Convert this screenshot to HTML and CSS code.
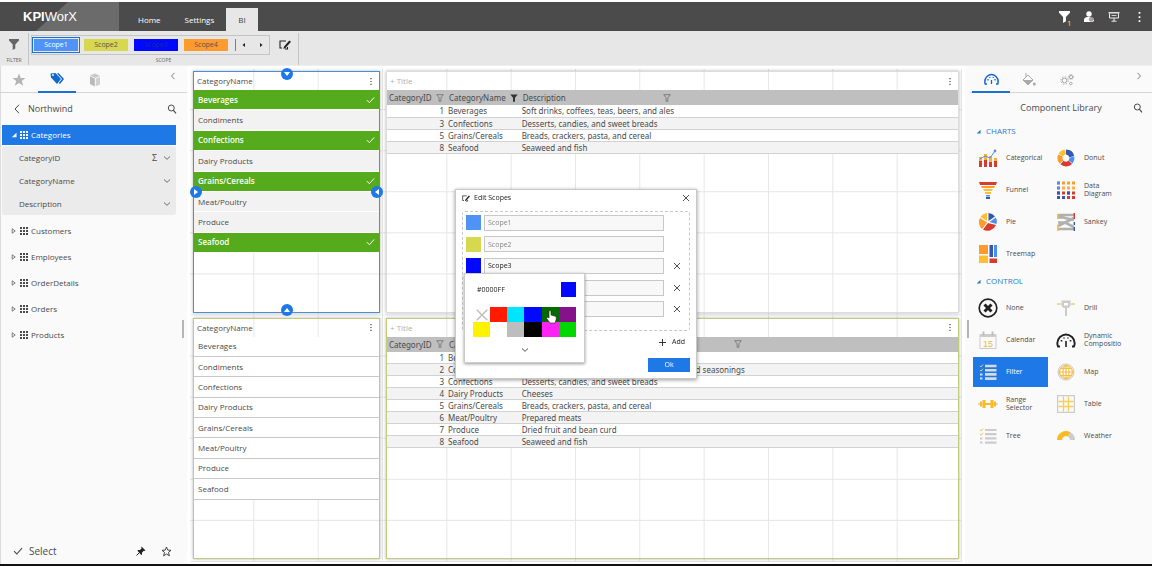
FILE: index.html
```html
<!DOCTYPE html>
<html lang="en">
<head>
  <meta charset="UTF-8">
  <meta name="viewport" content="width=device-width, initial-scale=1.0">
  <title>KPIWorX</title>
  <link rel="stylesheet" href="styles.css">
</head>
<body>

<!-- Shared icon shapes -->
<svg class="symbols" aria-hidden="true">
  <symbol id="i-funnel" viewBox="0 0 10 11"><path d="M0 0H10V1.5L6.3 5.5V9.5L3.7 11V5.5L0 1.5Z" fill="currentColor"/></symbol>
  <symbol id="i-filter" viewBox="0 0 8 8"><path d="M.7.7H7.3L4.9 3.8V7.3H3.1V3.8Z" fill="none" stroke="currentColor" stroke-width=".9"/></symbol>
  <symbol id="i-filter-on" viewBox="0 0 8 8"><path d="M.3.5H7.7L5 3.8V7.7H3V3.8Z" fill="currentColor"/></symbol>
  <symbol id="i-grid" viewBox="0 0 8 8"><path d="M0 0H2V2H0ZM3 0H5V2H3ZM6 0H8V2H6ZM0 3H2V5H0ZM3 3H5V5H3ZM6 3H8V5H6ZM0 6H2V8H0ZM3 6H5V8H3ZM6 6H8V8H6Z" fill="currentColor"/></symbol>
  <symbol id="i-down" viewBox="0 0 8 8"><path d="M1 2.5L4 5.3L7 2.5" fill="none" stroke="currentColor" stroke-width=".8"/></symbol>
  <symbol id="i-left" viewBox="0 0 8 10"><path d="M6 .8L2 5L6 9.2" fill="none" stroke="currentColor"/></symbol>
  <symbol id="i-right" viewBox="0 0 8 10"><path d="M2 .8L6 5L2 9.2" fill="none" stroke="currentColor"/></symbol>
  <symbol id="i-search" viewBox="0 0 10 10"><circle cx="4.3" cy="4" r="3" fill="none" stroke="currentColor"/><path d="M6.3 6.2L9 9.3" stroke="currentColor" stroke-width="1.2"/></symbol>
  <symbol id="i-close" viewBox="0 0 8 8"><path d="M1 1L7 7M7 1L1 7" stroke="currentColor" stroke-width=".8"/></symbol>
  <symbol id="i-check" viewBox="0 0 10 8"><path d="M1 4.2L3.8 7L9 1.2" fill="none" stroke="currentColor" stroke-width="1.1"/></symbol>
  <symbol id="i-dots" viewBox="0 0 2 8"><path d="M.3 0H1.7V1.4H.3ZM.3 3.3H1.7V4.7H.3ZM.3 6.6H1.7V8H.3Z" fill="currentColor"/></symbol>
  <symbol id="i-edit" viewBox="0 0 12 10"><path d="M7 1H1V8H3M6 9H8.5V7" fill="none" stroke="currentColor" stroke-width="1.1"/><path d="M10.3 .6L12 1.8L6.5 8L4.4 9L4.9 6.8Z" fill="currentColor"/></symbol>
  <symbol id="i-expand" viewBox="0 0 6 8"><path d="M1.2 1.8L4.2 4L1.2 6.2Z" fill="none" stroke="currentColor" stroke-width=".7"/></symbol>
  <symbol id="i-open" viewBox="0 0 6 6"><path d="M5.5 .8V5.3H.8Z" fill="currentColor"/></symbol>
</svg>

<header class="topbar">
  <div class="brand">
    <svg class="brand-shade" viewBox="0 0 119 29" preserveAspectRatio="none"><path d="M68 0H119V29H36Z" fill="#6b6b6b"/></svg>
    <span class="brand-name"><b>KPI</b>WorX</span>
  </div>
  <nav class="nav">
    <a href="#">Home</a>
    <a href="#">Settings</a>
    <a href="#" class="active">BI</a>
  </nav>
  <div class="topbar-actions">
    <button class="icon-button" aria-label="Filters"><svg width="11" height="12"><use href="#i-funnel"/></svg><span class="filter-count">1</span></button>
    <button class="icon-button" aria-label="User"><svg width="12" height="12" viewBox="0 0 12 12"><circle cx="6" cy="3" r="2.7" fill="#fff"/><path d="M1 11V8.5Q1.5 6 4.5 6H8Q10.8 6.5 11 9V10L9.5 11Z" fill="#fff"/><circle cx="8.3" cy="8.3" r="2" fill="#b5a6a6" stroke="#777" stroke-width=".6"/></svg></button>
    <button class="icon-button" aria-label="Present"><svg width="12" height="10" viewBox="0 0 12 10"><path d="M.5 .8H11.5" stroke="#eee" stroke-width="1.4"/><path d="M1.5 1.5V6H10.5V1.5M6 6V9M3.5 9.2H8.5" fill="none" stroke="#eee"/><path d="M3.5 3.5H8.5" stroke="#ccc"/></svg></button>
    <button class="icon-button" aria-label="More"><svg width="3" height="10"><use href="#i-dots"/></svg></button>
  </div>
</header>

<section class="ribbon">
  <div class="ribbon-group">
    <button class="ribbon-body icon-button" aria-label="Filter"><svg width="10" height="11"><use href="#i-funnel"/></svg></button>
    <div class="ribbon-label">FILTER</div>
  </div>
  <div class="ribbon-group ribbon-scopes">
    <div class="ribbon-body">
      <div class="scope-strip">
        <button class="scope scope-1 selected">Scope1</button>
        <button class="scope scope-2">Scope2</button>
        <button class="scope scope-3">Scope3</button>
        <button class="scope scope-4">Scope4</button>
        <span class="scope-next"></span>
        <button class="arrow" aria-label="Previous scope"><svg width="4" height="6"><path d="M3 1V5L.5 3Z"/></svg></button>
        <button class="arrow" aria-label="Next scope"><svg width="4" height="6"><path d="M1 1V5L3.5 3Z"/></svg></button>
      </div>
      <button class="icon-button edit-scopes" aria-label="Edit scopes"><svg width="12" height="10"><use href="#i-edit"/></svg></button>
    </div>
    <div class="ribbon-label">SCOPE</div>
  </div>
</section>

<main class="workspace">

  <!-- Data panel -->
  <aside class="panel data-panel">
    <div class="tabs">
      <button class="tab" aria-label="Favorites"><svg width="14" height="14" viewBox="0 0 14 14"><path d="M7 .5L8.8 5H13.5L9.8 8L11.2 12.8L7 10L2.8 12.8L4.2 8L.5 5H5.2Z" fill="#b5b5b5"/></svg></button>
      <button class="tab active" aria-label="Tags"><svg width="15" height="13" viewBox="0 0 15 13"><path d="M.5 1.5L5.5 1L11 7L7 12L1 5.5Z" fill="#1368cf"/><circle cx="3" cy="3" r=".9" fill="#fff"/><path d="M7 1.5L8.5 1L14 7L10 12L8.8 11L12 7Z" fill="#1368cf"/></svg></button>
      <button class="tab" aria-label="Models"><svg width="12" height="14" viewBox="0 0 12 14"><path d="M1 2.5L6 .5L11 3L6.500 5Z" fill="#c9c9c9"/><path d="M1 3.300L5.800 5.600V13.500L1 11Z" fill="#b9b9b9"/><path d="M6.800 5.800L11 4V11.500L6.800 13.300Z" fill="#d0d0d0"/></svg></button>
      <button class="collapse" aria-label="Collapse"><svg width="6" height="8"><use href="#i-left"/></svg></button>
    </div>
    <div class="source">
      <button class="icon-button" aria-label="Back"><svg width="8" height="10"><use href="#i-left"/></svg></button>
      <h2>Northwind</h2>
      <button class="icon-button" aria-label="Search"><svg width="10" height="10"><use href="#i-search"/></svg></button>
    </div>
    <ul class="tree">
      <li class="node open"><svg width="6" height="6"><use href="#i-open"/></svg><svg width="8" height="8"><use href="#i-grid"/></svg>Categories</li>
      <li>
        <ul class="fields">
          <li>CategoryID<span class="sigma">Σ</span><svg width="8" height="8"><use href="#i-down"/></svg></li>
          <li>CategoryName<svg width="8" height="8"><use href="#i-down"/></svg></li>
          <li>Description<svg width="8" height="8"><use href="#i-down"/></svg></li>
        </ul>
      </li>
      <li class="node"><svg width="6" height="8"><use href="#i-expand"/></svg><svg width="8" height="8"><use href="#i-grid"/></svg>Customers</li>
      <li class="node"><svg width="6" height="8"><use href="#i-expand"/></svg><svg width="8" height="8"><use href="#i-grid"/></svg>Employees</li>
      <li class="node"><svg width="6" height="8"><use href="#i-expand"/></svg><svg width="8" height="8"><use href="#i-grid"/></svg>OrderDetails</li>
      <li class="node"><svg width="6" height="8"><use href="#i-expand"/></svg><svg width="8" height="8"><use href="#i-grid"/></svg>Orders</li>
      <li class="node"><svg width="6" height="8"><use href="#i-expand"/></svg><svg width="8" height="8"><use href="#i-grid"/></svg>Products</li>
    </ul>
    <div class="panel-footer">
      <button class="select"><svg width="10" height="8"><use href="#i-check"/></svg>Select</button>
      <button class="icon-button" aria-label="Pin"><svg width="10" height="10" viewBox="0 0 10 10"><path d="M5.5 .5L9.5 4.5L8.5 5L7.8 4.7L6 6.5V8.5L5.2 9L1.5 4.8L2 4L4 4L5.7 2.3L5.2 1.3Z" fill="#222"/><path d="M3.5 6.5L.5 9.5" stroke="#222"/></svg></button>
      <button class="icon-button" aria-label="Add to favorites"><svg width="11" height="11" viewBox="0 0 11 11"><path d="M5.5 1L6.8 4.1L10 4.3L7.5 6.4L8.4 9.8L5.5 8L2.6 9.8L3.5 6.4L1 4.3L4.2 4.1Z" fill="none" stroke="#333" stroke-width=".9"/></svg></button>
    </div>
    <span class="grip"></span>
  </aside>

  <!-- Dashboard -->
  <div class="board">
    <article class="widget narrow selected">
      <header class="widget-head">CategoryName<button class="icon-button" aria-label="Menu"><svg width="2" height="7"><use href="#i-dots"/></svg></button></header>
      <ul class="filter-list striped">
        <li class="on">Beverages<svg width="9" height="8"><use href="#i-check"/></svg></li>
        <li>Condiments</li>
        <li class="on">Confections<svg width="9" height="8"><use href="#i-check"/></svg></li>
        <li>Dairy Products</li>
        <li class="on">Grains/Cereals<svg width="9" height="8"><use href="#i-check"/></svg></li>
        <li>Meat/Poultry</li>
        <li>Produce</li>
        <li class="on">Seafood<svg width="9" height="8"><use href="#i-check"/></svg></li>
      </ul>
      <span class="handle top"><svg width="6" height="4"><path d="M0 0H6L3 4Z"/></svg></span>
      <span class="handle bottom"><svg width="6" height="4"><path d="M0 4H6L3 0Z"/></svg></span>
      <span class="handle left"><svg width="4" height="6"><path d="M0 0V6L4 3Z"/></svg></span>
      <span class="handle right"><svg width="4" height="6"><path d="M4 0V6L0 3Z"/></svg></span>
    </article>

    <article class="widget wide">
      <header class="widget-head"><span class="placeholder">+ Title</span><button class="icon-button" aria-label="Menu"><svg width="2" height="7"><use href="#i-dots"/></svg></button></header>
      <table class="data">
        <thead>
          <tr>
            <th><div>CategoryID<svg width="8" height="8"><use href="#i-filter"/></svg></div></th>
            <th><div>CategoryName<svg class="applied" width="8" height="8"><use href="#i-filter-on"/></svg></div></th>
            <th><div>Description<svg width="8" height="8"><use href="#i-filter"/></svg></div></th>
            <th class="rest"></th>
          </tr>
        </thead>
        <tbody>
          <tr><td>1</td><td>Beverages</td><td>Soft drinks, coffees, teas, beers, and ales</td><td></td></tr>
          <tr><td>3</td><td>Confections</td><td>Desserts, candies, and sweet breads</td><td></td></tr>
          <tr><td>5</td><td>Grains/Cereals</td><td>Breads, crackers, pasta, and cereal</td><td></td></tr>
          <tr><td>8</td><td>Seafood</td><td>Seaweed and fish</td><td></td></tr>
        </tbody>
      </table>
    </article>

    <article class="widget narrow scoped">
      <header class="widget-head">CategoryName<button class="icon-button" aria-label="Menu"><svg width="2" height="7"><use href="#i-dots"/></svg></button></header>
      <ul class="filter-list ruled">
        <li>Beverages</li>
        <li>Condiments</li>
        <li>Confections</li>
        <li>Dairy Products</li>
        <li>Grains/Cereals</li>
        <li>Meat/Poultry</li>
        <li>Produce</li>
        <li>Seafood</li>
      </ul>
    </article>

    <article class="widget wide scoped">
      <header class="widget-head"><span class="placeholder">+ Title</span><button class="icon-button" aria-label="Menu"><svg width="2" height="7"><use href="#i-dots"/></svg></button></header>
      <table class="data">
        <thead>
          <tr>
            <th><div>CategoryID<svg width="8" height="8"><use href="#i-filter"/></svg></div></th>
            <th><div>CategoryName<svg width="8" height="8"><use href="#i-filter"/></svg></div></th>
            <th><div>Description<svg width="8" height="8"><use href="#i-filter"/></svg></div></th>
            <th class="rest"></th>
          </tr>
        </thead>
        <tbody>
          <tr><td>1</td><td>Beverages</td><td>Soft drinks, coffees, teas, beers, and ales</td><td></td></tr>
          <tr><td>2</td><td>Condiments</td><td>Sweet and savory sauces, relishes, spreads, and seasonings</td><td></td></tr>
          <tr><td>3</td><td>Confections</td><td>Desserts, candies, and sweet breads</td><td></td></tr>
          <tr><td>4</td><td>Dairy Products</td><td>Cheeses</td><td></td></tr>
          <tr><td>5</td><td>Grains/Cereals</td><td>Breads, crackers, pasta, and cereal</td><td></td></tr>
          <tr><td>6</td><td>Meat/Poultry</td><td>Prepared meats</td><td></td></tr>
          <tr><td>7</td><td>Produce</td><td>Dried fruit and bean curd</td><td></td></tr>
          <tr><td>8</td><td>Seafood</td><td>Seaweed and fish</td><td></td></tr>
        </tbody>
      </table>
    </article>
  </div>

  <!-- Component library -->
  <aside class="panel library-panel">
    <span class="grip"></span>
    <div class="tabs">
      <button class="tab active" aria-label="Components"><svg width="15" height="12" viewBox="0 0 15 12"><path d="M3 11H1.2Q0 6.5 3 3.5Q7.5 -.5 12 3.5Q15 6.5 13.8 11H12" fill="none" stroke="#1368cf" stroke-width="1.5"/><path d="M7.5 11V7M4 7.5V6M5.8 5V4M9.2 5V4M11 7.5V6" stroke="#1368cf" stroke-width="1.3"/></svg></button>
      <button class="tab" aria-label="Appearance"><svg width="14" height="13" viewBox="0 0 14 13"><path d="M1 7L6 2L11 7L6 12Z" fill="none" stroke="#aaa"/><path d="M1 7H11L6 12Z" fill="#aaa"/><path d="M4 0V4" stroke="#aaa"/><circle cx="12.3" cy="11" r="1.5" fill="#aaa"/></svg></button>
      <button class="tab" aria-label="Settings"><svg width="14" height="12" viewBox="0 0 14 12"><g fill="none" stroke="#aaa"><circle cx="4.5" cy="6.5" r="2.3"/><circle cx="4.5" cy="6.5" r="3.7" stroke-dasharray="1.5 1.4"/><circle cx="11" cy="3" r="1.6"/><circle cx="11" cy="3" r="2.5" stroke-dasharray="1 1"/><circle cx="10.8" cy="9.5" r="1.3"/></g></svg></button>
      <button class="collapse" aria-label="Collapse"><svg width="6" height="8"><use href="#i-right"/></svg></button>
    </div>
    <div class="source">
      <h2>Component Library</h2>
      <button class="icon-button" aria-label="Search"><svg width="10" height="10"><use href="#i-search"/></svg></button>
    </div>

    <h3><svg width="5" height="5"><use href="#i-open"/></svg>CHARTS</h3>
    <div class="components">
      <button class="component"><svg width="18" height="18" viewBox="0 0 18 18"><path d="M0 11H3V18H0ZM5 10H8V18H5ZM10 12H13V18H10ZM15 11H18V18H15Z" fill="#d93a30"/><path d="M0 8H3V12H0ZM5 5H8V11H5ZM10 7H13V13H10ZM15 9H18V12H15Z" fill="#fbb03b"/><path d="M1 10L6 7L11 9L16 2" fill="none" stroke="#5b8fd8"/><circle cx="16" cy="2" r="1.4" fill="#5b8fd8"/></svg>Categorical</button>
      <button class="component"><svg width="18" height="18" viewBox="-9 -9 18 18"><g fill="none" stroke-width="5"><path d="M0 -6A6 6 0 0 1 5.8 -1.5" stroke="#3458b0"/><path d="M5.9 -1A6 6 0 0 1 4.6 3.8" stroke="#4b8df0"/><path d="M4.3 4.2A6 6 0 0 1 -4 4.5" stroke="#d93a30"/><path d="M-4.5 4A6 6 0 0 1 -5.5 -2.4" stroke="#ff9b2c"/><path d="M-5.2 -3A6 6 0 0 1 -.6 -6" stroke="#fdbf2d"/></g></svg>Donut</button>
      <button class="component"><svg width="18" height="18" viewBox="0 0 18 18"><path d="M0 1H18L17 4H1Z" fill="#d93a30"/><path d="M2 5H16L15 7H3Z" fill="#ff9b2c"/><path d="M4 8H14L12.5 10H5.5Z" fill="#fdbf2d"/><path d="M6 11H12V13H6Z" fill="#fdbf2d"/><path d="M7 14H11V15.5H7Z" fill="#4b8df0"/><path d="M7 16H11V18H7Z" fill="#3458b0"/></svg>Funnel</button>
      <button class="component"><svg width="18" height="18" viewBox="0 0 18 18"><g stroke-width="3" stroke-dasharray="3 2"><path d="M0 2H18" stroke="#ff9b2c"/><path d="M0 7H18" stroke="#fbb03b"/><path d="M0 12H18" stroke="#d93a30"/><path d="M0 16.5H18" stroke="#d93a30"/></g><path d="M0 .5H3V3.5H0ZM0 5.5H3V8.5H0Z" fill="#4b8df0"/><path d="M0 10.5H3V13.5H0ZM0 15H3V18H0ZM5 15H8V18H5ZM10 10.5H13V13.5H10Z" fill="#3458b0"/></svg>Data Diagram</button>
      <button class="component"><svg width="18" height="18" viewBox="-9 -9 18 18"><path d="M.5 -1V-9A9 9 0 0 1 7 -5.5Z" fill="#3458b0"/><path d="M1.5 0L7.8 -4.5A9 9 0 0 1 8.5 2Z" fill="#4b8df0"/><path d="M0 1L8 3A9 9 0 0 1 -5 7.5Z" fill="#d93a30"/><path d="M-1 .5L-6 7A9 9 0 0 1 -8 -4Z" fill="#ff9b2c"/><path d="M-1 -1L-7.5 -5A9 9 0 0 1 -1 -9Z" fill="#fdbf2d"/></svg>Pie</button>
      <button class="component"><svg width="18" height="18" viewBox="0 0 18 18"><path d="M1 2H17M1 4.5H6L17 7M1 13L17 5M1 9.500H8L17 14M1 16H17" fill="none" stroke="#b0b0b0" stroke-width="2.600"/><path d="M.8 1V6M.8 12V18" stroke="#fdbf2d" stroke-width="1.500"/><path d="M17.300 0V6" stroke="#d93a30" stroke-width="1.400"/><path d="M17.300 9V12M17.300 14V18" stroke="#3458b0" stroke-width="1.400"/></svg>Sankey</button>
      <button class="component"><svg width="18" height="18" viewBox="0 0 18 18"><path d="M0 0H9V9H0Z" fill="#ff9b2c"/><path d="M0 10.5H9V18H0Z" fill="#fdbf2d"/><path d="M10.5 0H14V12H10.5Z" fill="#3458b0"/><path d="M15 0H18V12H15Z" fill="#4b8df0"/><path d="M10.5 13.5H18V18H10.5Z" fill="#d93a30"/></svg>Treemap</button>
    </div>

    <h3><svg width="5" height="5"><use href="#i-open"/></svg>CONTROL</h3>
    <div class="components">
      <button class="component"><svg width="20" height="20" viewBox="0 0 20 20"><circle cx="10" cy="10" r="8.8" fill="none" stroke="#222" stroke-width="1.7"/><path d="M6.5 6.5L13.5 13.5M13.5 6.5L6.5 13.5" stroke="#222" stroke-width="3"/></svg>None</button>
      <button class="component"><svg width="18" height="18" viewBox="0 0 18 18"><path d="M0 5H4M14 5H18" stroke="#e7cf7a" stroke-width="1.3"/><path d="M4.5 1.5H13.5V7L11.5 9H6.5L4.5 7Z" fill="#ccc"/><path d="M7 4H11V6.5H7Z" fill="#fff"/><path d="M9 9V17" stroke="#bbb" stroke-width="1.5"/></svg>Drill</button>
      <button class="component"><svg width="18" height="18" viewBox="0 0 18 18"><path d="M1 3.5H17V17.5H1Z" fill="none" stroke="#ccc"/><path d="M1 3H17V6H1Z" fill="#ccc"/><path d="M4.5 .5V4.5M13.5 .5V4.5" stroke="#bbb" stroke-width="1.8"/><text class="day" x="9" y="15.5" text-anchor="middle">15</text></svg>Calendar</button>
      <button class="component"><svg width="20" height="20" viewBox="0 0 20 20"><path d="M4 16.5H2Q0 11 4 7Q7 4.5 10 4.5Q13 4.5 16 7Q20 11 18 16.5H16" fill="none" stroke="#222" stroke-width="1.9"/><path d="M10 17V11M5.5 11.5V10M8 8.5V7.5M12 8.5V7.5M14.5 11.5V10" stroke="#222" stroke-width="1.6"/></svg>Dynamic Compositio</button>
      <button class="component chosen"><svg width="18" height="18" viewBox="0 0 18 18"><path d="M6 3H17.5M6 7.2H17.5M6 11.4H17.5M6 15.6H17.5" stroke="#d5dae0" stroke-width="2.6"/><path d="M1 2.8L2 4L4 1.5M1 7L2 8.2L4 5.7" fill="none" stroke="#e3c94f"/><path d="M1 11.4H3.5M1 15.6H3.5" stroke="#d5dae0" stroke-width="2"/></svg>Filter</button>
      <button class="component"><svg width="18" height="18" viewBox="0 0 18 18"><circle cx="9" cy="9" r="8" fill="none" stroke="#ccc"/><g fill="none" stroke="#f1c24a" stroke-width="1.2"><circle cx="9" cy="9" r="6.5"/><ellipse cx="9" cy="9" rx="3" ry="6.5"/><path d="M9 1V17M1 9H17M3 5.5H15M3 12.5H15"/></g></svg>Map</button>
      <button class="component"><svg width="20" height="18" viewBox="0 0 20 18"><path d="M0 9H20" stroke="#d8c58c" stroke-width="1.2"/><path d="M2 6.5H4V11.5H2ZM4.5 5H7.5V13H4.5ZM12.5 5H15.5V13H12.5ZM16 6.5H18V11.5H16Z" fill="#fbb922"/><path d="M7 9H13" stroke="#fbb922" stroke-width="2"/></svg>Range Selector</button>
      <button class="component"><svg width="18" height="18" viewBox="0 0 18 18"><path d="M.6 .6H17.4V17.4H.6Z" fill="none" stroke="#ccc" stroke-width="1.2"/><path d="M6.5 1.5V16.5M11.5 1.5V16.5M1.5 6.5H16.5M1.5 11.5H16.5" stroke="#f3cf5c" stroke-width="1.3"/></svg>Table</button>
      <button class="component"><svg width="18" height="18" viewBox="0 0 18 18"><path d="M6 3H17.5M6 7.2H17.5M6 11.4H17.5M6 15.6H17.5" stroke="#ccc" stroke-width="2.2"/><path d="M1 2.8L2 4L4 1.5M1 7L2 8.2L4 5.7" fill="none" stroke="#e3c94f"/><path d="M1 11.4H3.5M1 15.6H3.5" stroke="#ccc" stroke-width="2"/></svg>Tree</button>
      <button class="component"><svg width="18" height="18" viewBox="0 0 18 18"><path d="M2.500 13A6.500 6.500 0 0 1 12.250 7.370" fill="none" stroke="#fbb922" stroke-width="5"/><path d="M12.250 7.370A6.500 6.500 0 0 1 15.500 13" fill="none" stroke="#ccc" stroke-width="5"/></svg>Weather</button>
    </div>
  </aside>
</main>

<!-- Edit scopes dialog -->
<div class="overlay">
  <section class="dialog" role="dialog" aria-label="Edit Scopes">
    <header class="dialog-head">
      <svg width="8" height="7"><use href="#i-edit"/></svg>
      <span>Edit Scopes</span>
      <button class="icon-button" aria-label="Close"><svg width="8" height="8"><use href="#i-close"/></svg></button>
    </header>
    <div class="scope-rows">
      <div class="scope-row"><button class="swatch scope-1" aria-label="Scope1 color"></button><input type="text" value="Scope1" aria-label="Scope1 name" disabled></div>
      <div class="scope-row"><button class="swatch scope-2" aria-label="Scope2 color"></button><input type="text" value="Scope2" aria-label="Scope2 name" disabled></div>
      <div class="scope-row">
        <button class="swatch scope-3" aria-label="Scope3 color"></button><input type="text" value="Scope3" aria-label="Scope3 name">
        <button class="icon-button" aria-label="Remove Scope3"><svg width="8" height="8"><use href="#i-close"/></svg></button>
        <div class="picker">
          <div class="picker-head">
            <input type="text" value="#0000FF" aria-label="Hex color">
            <span class="swatch scope-3"></span>
          </div>
          <div class="palette">
            <button class="no-color" aria-label="No color"><svg width="14" height="14"><use href="#i-close"/></svg></button>
            <button class="c-red" aria-label="Red"></button>
            <button class="c-cyan" aria-label="Cyan"></button>
            <button class="c-blue" aria-label="Blue"></button>
            <button class="c-green" aria-label="Green"></button>
            <button class="c-purple" aria-label="Purple"></button>
            <button class="c-yellow" aria-label="Yellow"></button>
            <button class="c-white" aria-label="White"></button>
            <button class="c-grey" aria-label="Grey"></button>
            <button class="c-black" aria-label="Black"></button>
            <button class="c-magenta" aria-label="Magenta"></button>
            <button class="c-lime" aria-label="Lime"></button>
            <svg class="pointer" width="11" height="14" viewBox="0 0 11 14"><path d="M3 1Q4 0 5 1V5L9.5 6.3Q10.5 7 10.3 9L9 13H4L.7 8.5Q.5 7 2 7.3L3 8Z" fill="#fff" stroke="#222" stroke-width=".6"/></svg>
          </div>
          <button class="more-colors" aria-label="More colors"><svg width="8" height="8"><use href="#i-down"/></svg></button>
        </div>
      </div>
      <div class="scope-row"><button class="swatch scope-4" aria-label="Scope4 color"></button><input type="text" value="Scope4" aria-label="Scope4 name"><button class="icon-button" aria-label="Remove Scope4"><svg width="8" height="8"><use href="#i-close"/></svg></button></div>
      <div class="scope-row"><button class="swatch scope-5" aria-label="Scope5 color"></button><input type="text" value="Scope5" aria-label="Scope5 name"><button class="icon-button" aria-label="Remove Scope5"><svg width="8" height="8"><use href="#i-close"/></svg></button></div>
    </div>
    <button class="add"><svg width="7" height="7"><path d="M3.5 0V7M0 3.5H7" stroke="#333"/></svg>Add</button>
    <button class="ok">Ok</button>
  </section>
</div>

</body>
</html>
```
FILE: styles.css
```css
* {box-sizing: border-box;}

body {
  display: flex;
  flex-direction: column;
  height: 100vh;
  margin: 0;
  border-top: 2px solid #fff;
  border-bottom: 2px solid #111;
  background-color: #fff;
  color: #4a4a4a;
  font-family: "Open Sans", "Noto Sans", sans-serif;
  font-size: 8px;
  line-height: 12px;
}

button, input {font: inherit; color: inherit; border: none; padding: 0; margin: 0; background: none;}
button {cursor: pointer;}
ul {list-style: none; margin: 0; padding: 0;}
h2, h3 {margin: 0; font-weight: normal;}
svg {display: block; flex: none;}
.symbols {position: absolute; width: 0; height: 0;}
.icon-button {display: flex; align-items: center; justify-content: center;}

/* Top bar */
.topbar {
  display: flex;
  flex: none;
  height: 29px;
  background-color: #4b4b4b;
  color: #fff;
}

.brand {position: relative; width: 119px; padding: 7px 0 0 23px;}
.brand-shade {position: absolute; left: 0; top: 0; width: 100%; height: 100%;}
.brand-name {
  position: relative;
  font-family: "Liberation Sans", Arial, sans-serif;
  font-size: 13px;
  line-height: 16px;
}

.nav {display: flex; align-items: flex-end; padding-left: 7px;}
.nav a {
  height: 23px;
  padding: 0 12px;
  line-height: 24px;
  color: #fff;
  text-decoration: none;
}
.nav .active {background-color: #e7e7e7; color: #444;}

.topbar-actions {display: flex; align-items: center; gap: 13px; margin-left: auto; padding-right: 7px;}
.topbar-actions .icon-button {position: relative; width: 12px;}
.filter-count {position: absolute; left: 9px; top: 8px; line-height: 8px; color: #f4d35e;}

/* Ribbon */
.ribbon {display: flex; flex: none; height: 35px; background-color: #e7e7e7; border-bottom: 1px solid #efefef;}
.ribbon-group {display: flex; flex-direction: column; align-items: center; width: 29px; margin-top: 2px; border-right: 1px solid #c4c4c4; color: #666;}
.ribbon-scopes {width: 270px;}
.ribbon-body {display: flex; align-items: center; height: 23px;}
.ribbon-scopes .ribbon-body {width: 100%; padding-left: 2px;}
.ribbon-label {font-size: 5px; line-height: 9px;}

.scope-strip {display: flex; align-items: center; width: 239px; height: 20px; border: 1px solid #c4c4c4;}
.scope {
  flex: none;
  width: 48px;
  height: 16px;
  margin-right: 2px;
  border: 2px solid transparent;
  background-clip: padding-box;
  font-size: 7px;
  line-height: 12px;
  color: #555;
}
.scope.selected {border: 1px solid #1a73d8; box-shadow: inset 0 0 0 1px #e7e7e7; color: #fff;}
.scope-1 {background-color: #4f93f7;}
.scope-2 {background-color: #d6d850;}
.scope-3 {background-color: #0008ff;}
.scope-4 {background-color: #ff9a2e;}
.scope-5 {background-color: #f0523f;}
.scope.scope-3 {color: #1c2a9a;}
.scope-next {flex: none; width: 1px; height: 12px; margin-left: 3px; background-color: #f0523f;}
.arrow {width: 4px; margin-left: 6px; fill: #222;}
.arrow + .arrow {margin-left: 13px;}
.edit-scopes {margin-left: 9px; color: #222;}

/* Workspace */
.workspace {display: flex; flex: 1; min-height: 0;}
.panel {position: relative; display: flex; flex-direction: column; width: 187px; background-color: #fafafa;}
.data-panel {box-shadow: inset 1px 0 #ddd;}
.grip {position: absolute; top: 254px; right: 3px; width: 2px; height: 18px; background-color: #b5b5b5;}
.library-panel .grip {left: 2px; right: auto;}

.tabs {display: flex; height: 27px; border-bottom: 1px solid #d5d5d5;}
.tab {display: flex; align-items: center; justify-content: center; width: 38px; height: 27px;}
.tab.active {border-bottom: 2px solid #1b6fd6;}
.library-panel .tabs {margin-left: 5px; padding-left: 2px;}
.collapse {margin-left: auto; padding: 0 11px 7px 0; color: #555;}
.library-panel .collapse {padding-right: 10px;}

.source {display: flex; align-items: center; height: 31px; padding: 0 10px 0 13px;}
.source h2 {flex: 1; font-size: 9px; line-height: 14px; padding-left: 7px;}
.library-panel .source {height: 29px; padding-right: 9px;}
.library-panel h2 {padding-left: 11px; text-align: center;}

/* Data tree */
.tree {padding: 1px 11px 0 2px;}
.node {display: flex; align-items: center; gap: 3px; height: 26px; padding-left: 9px;}
.node.open {height: 20px; background-color: #1e78e6; color: #fff;}
.fields {margin: 1px 0 3px; padding: 0 5px 0 17px; background-color: #ebebeb; border-radius: 2px;}
.fields li {display: flex; align-items: center; height: 23px;}
.fields svg {margin-left: auto;}
.sigma {margin-left: auto; padding-right: 6px; font-size: 9px;}
.sigma + svg {margin-left: 0;}

.panel-footer {display: flex; align-items: center; gap: 15px; margin-top: auto; height: 26px; padding: 0 15px 0 13px;}
.select {display: flex; align-items: center; gap: 6px; margin-right: auto; font-size: 10px;}

/* Dashboard: 12 by 12 cells, drawn as faint lines */
.board {
  display: grid;
  flex: 1;
  grid-template-columns: repeat(12, minmax(0, 1fr));
  grid-template-rows: repeat(12, minmax(0, 1fr));
  margin: 3px 3px 2px;
  background-image: linear-gradient(to left, #e6e6e6 1px, transparent 1px), linear-gradient(to top, #e6e6e6 1px, transparent 1px);
  background-size: calc(100% / 12) calc(100% / 12);
}
.widget {
  position: relative;
  grid-row: span 6;
  margin: 2px 3px 3px;
  border: 1px solid #ddd;
  box-shadow: 0 0 3px rgba(0, 0, 0, 0.3);
}
.narrow {grid-column: span 3;}
.wide {grid-column: span 9;}
.widget.selected {border-color: #4a90d9;}
.widget.scoped {border-color: #c3cb7c;}
.widget-head {display: flex; align-items: center; justify-content: space-between; height: 18px; padding: 0 7px 0 3px;}
.placeholder {color: #b0b0b0;}

.filter-list {display: grid; grid-template-rows: repeat(8, 1fr); height: 163px;}
.filter-list li {display: flex; align-items: center; justify-content: space-between; padding: 0 4px; border-bottom: 1px solid #fff;}
.striped li {background-color: #f2f2f2;}
.striped .on {background-color: #55ab1c; color: #fff; font-weight: 600;}
.ruled li {background-color: #fff; border-color: #c9c9c9;}

.handle {
  position: absolute;
  display: flex;
  align-items: center;
  justify-content: center;
  width: 12px;
  height: 12px;
  border-radius: 50%;
  background-color: #1e78e6;
  fill: #fff;
}
.handle.top {top: -4px; left: calc(50% - 6px);}
.handle.bottom {bottom: -4px; left: calc(50% - 6px);}
.handle.left {left: -4px; top: calc(50% - 6px);}
.handle.right {right: -4px; top: calc(50% - 6px);}

/* Data tables */
.data {width: 100%; border-collapse: collapse; font-family: "Noto Sans", sans-serif; line-height: 11px; white-space: nowrap;}
.data th {height: 15px; padding: 0 3px 0 2px; background-color: #bfbfbf; font-weight: normal; text-align: left;}
.data th div {display: flex; align-items: center; justify-content: space-between; gap: 4px;}
.data th svg {color: #777;}
.data th svg.applied {color: #333;}
.data .rest {width: 100%;}
.data td {height: 12px; padding: 0 0 0 1px; background-color: #fff; border-bottom: 1px solid #d2d2d2;}
.data tr:nth-child(even) td {background-color: #f3f3f3;}
.data td:first-child {min-width: 60px; padding-right: 3px; text-align: right;}
.data td:nth-child(2) {min-width: 73px;}

/* Component library */
.library-panel h3 {display: flex; align-items: center; gap: 5px; height: 18px; margin-bottom: 3px; padding-left: 11px; font-size: 8px; color: #2a78d0;}
.components {display: grid; grid-template-columns: 75px 75px; gap: 2px 3px; padding: 0 0 3px 8px;}
.component {
  display: grid;
  grid-template-columns: 20px 1fr;
  align-items: center;
  justify-items: start;
  column-gap: 8px;
  height: 30px;
  padding-left: 5px;
  font-size: 7px;
  line-height: 8px;
  text-align: left;
}
.component svg {justify-self: center;}
.component.chosen {background-color: #1e78e6; color: #fff;}
.day {font-family: "Liberation Sans", Arial, sans-serif; font-size: 9px; fill: #e9b93c;}

/* Edit scopes dialog */
.overlay {position: fixed; inset: 0; display: flex; align-items: center; justify-content: center; padding-top: 2px;}
.dialog {
  display: flex;
  flex-direction: column;
  width: 242px;
  padding: 0 6px 6px;
  background-color: #fff;
  border: 1px solid #c8c8c8;
  box-shadow: 0 1px 4px rgba(0, 0, 0, 0.4);
  color: #222;
  font-size: 7px;
}
.dialog-head {display: flex; align-items: center; height: 16px; gap: 4px; margin-bottom: 5px;}
.dialog-head .icon-button {margin-left: auto;}
.scope-rows {
  display: grid;
  grid-template-rows: repeat(5, 1fr);
  height: 120px;
  padding: 0 8px 10px 3px;
  border: 1px dashed #c8c8c8;
  border-radius: 3px;
}
.scope-row {position: relative; display: flex; align-items: center; gap: 3px;}
.scope-row > input {width: 180px; height: 16px; padding: 0 3px; border: 1px solid #c8c8c8; background-color: #f8f8f8;}
.scope-row > input:disabled {color: #888;}
.scope-row > .icon-button {margin-left: auto;}
.swatch {width: 15px; height: 15px;}

.picker {
  position: absolute;
  z-index: 1;
  top: 18px;
  left: -2px;
  width: 121px;
  height: 90px;
  padding: 8px;
  background-color: #fff;
  border: 1px solid #ccc;
  box-shadow: 0 1px 3px rgba(0, 0, 0, 0.4);
}
.picker-head {display: flex; justify-content: space-between; margin-bottom: 10px;}
.picker-head input {width: 60px; height: 15px; padding-left: 4px;}
.palette {position: relative; display: grid; grid-template-columns: repeat(6, 1fr); grid-auto-rows: 15px;}
.no-color {display: flex; align-items: center; justify-content: center; color: #bbb;}
.c-red {background-color: #ff1a00;}
.c-cyan {background-color: #00e5ff;}
.c-blue {background-color: #0008ff;}
.c-green {background-color: #006b00;}
.c-purple {background-color: #85128a;}
.c-yellow {background-color: #fff200;}
.c-white {background-color: #fff;}
.c-grey {background-color: #bdbdbd;}
.c-black {background-color: #000;}
.c-magenta {background-color: #ff22f5;}
.c-lime {background-color: #00d900;}
.pointer {position: absolute; left: 73px; top: 3px;}
.more-colors {display: block; margin: 9px auto 0;}

.add {display: flex; align-items: center; gap: 6px; align-self: flex-end; margin: 5px 5px 10px 0; line-height: 12px;}
.ok {align-self: flex-end; width: 42px; height: 14px; background-color: #1e78e6; color: #fff; line-height: 14px;}
```
